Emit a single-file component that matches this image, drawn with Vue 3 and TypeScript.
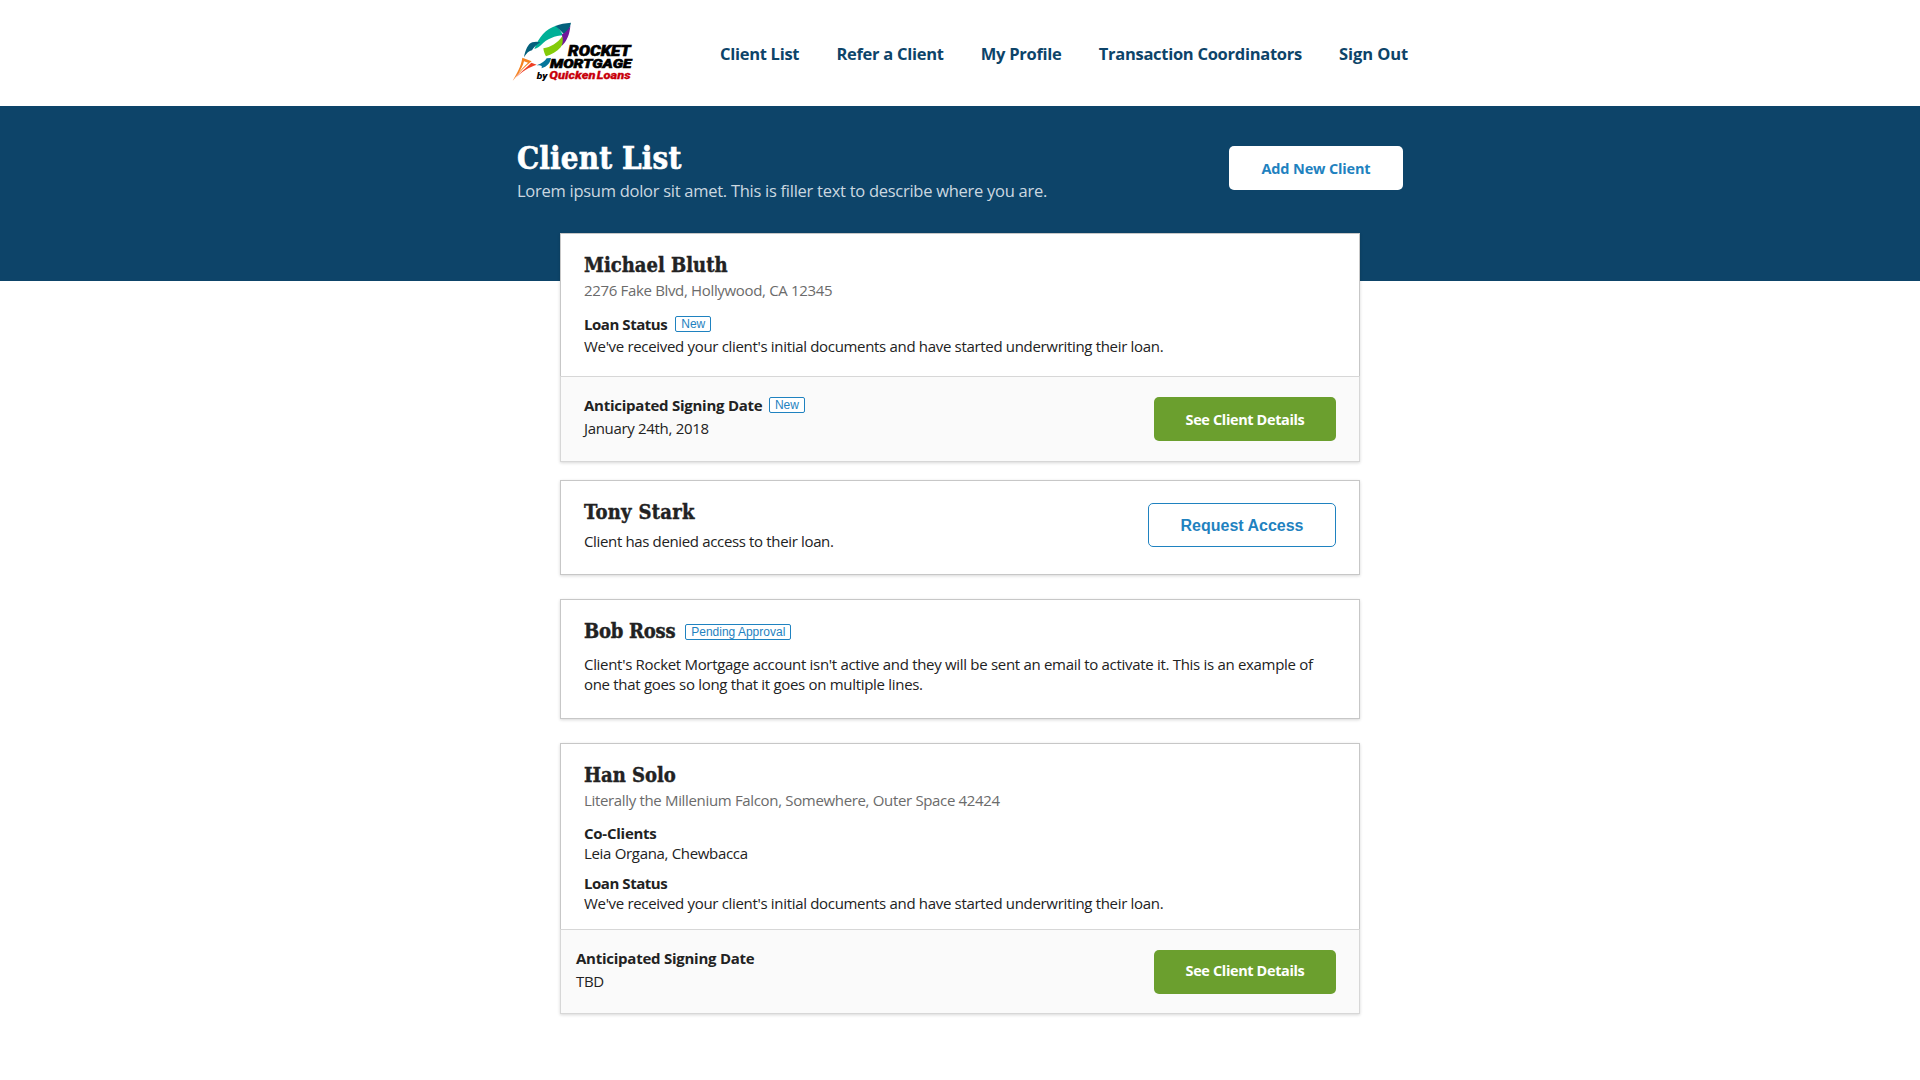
<script setup lang="ts">
const navItems: string[] = ['Client List', 'Refer a Client', 'My Profile', 'Transaction Coordinators', 'Sign Out']
</script>

<template>
  <div class="page">
    <header class="header">
      <div class="header-inner">
        <svg class="logo" viewBox="30 30 375 189" role="img" aria-label="Rocket Mortgage by Quicken Loans">
          <path d="M103 117 C116 80 138 57 168 47 C177 55 184 65 190 76 C166 76 140 88 124 104 C119 109 112 115 103 117 Z" fill="#00b097" />
          <path d="M166 48 C180 42 196 39 213 38 C210 52 205 66 197 78 C188 68 178 58 166 48 Z" fill="#03607c" />
          <path d="M211 48 C209 72 201 94 184 109 C186 96 187 86 186 73 C196 68 204 60 211 48 Z" fill="#70189a" />
          <path d="M130 115 C152 112 172 100 187 79 C190 94 188 104 182 112 C171 125 154 134 138 139 C134 132 131 124 130 115 Z" fill="#84cb0a" />
          <path d="M72 142 C76 120 84 101 97 97 C106 94 114 95 121 97 C108 105 101 113 96 121 C87 122 80 130 72 142 Z" fill="#03607c" />
          <path d="M110 166 C126 160 135 153 140 145 L153 144 C151 158 142 170 124 175 C128 169 125 165 110 166 Z" fill="#03759a" />
          <path d="M38 212 C51 190 63 169 67 143 L95 154 C77 168 58 187 38 212 Z M72 154 C69 167 62 179 56 188 C64 178 73 168 84 158 Z" fill="#f58220" fill-rule="evenodd" />
          <path d="M38 212 C59 188 78 174 94 158 L110 164 C88 172 66 182 38 212 Z" fill="#ee3e24" />
          <text class="logo-black" x="204" y="139" font-size="43" textLength="188" lengthAdjust="spacingAndGlyphs">ROCKET</text>
          <text class="logo-black" x="150" y="173" font-size="38" textLength="244" lengthAdjust="spacingAndGlyphs">MORTGAGE</text>
          <text class="logo-by" x="110" y="206" font-size="27" textLength="32" lengthAdjust="spacingAndGlyphs">by</text>
          <text class="logo-red" x="148" y="207" font-size="34" textLength="244" lengthAdjust="spacingAndGlyphs">Quicken Loans</text>
        </svg>
        <nav class="nav">
          <a v-for="item in navItems" :key="item" class="nav-link">{{ item }}</a>
        </nav>
      </div>
    </header>

    <section class="hero">
      <div class="hero-inner">
        <div>
          <h1 class="title">Client List</h1>
          <p class="subtitle">Lorem ipsum dolor sit amet. This is filler text to describe where you are.</p>
        </div>
        <button class="btn btn-white">Add New Client</button>
      </div>
    </section>

    <main class="cards">
      <article class="card michael">
        <div class="body">
          <h2 class="name">Michael Bluth</h2>
          <p class="text address">2276 Fake Blvd, Hollywood, CA 12345</p>
          <div class="line status"><h3 class="label">Loan Status</h3><span class="badge">New</span></div>
          <p class="text detail">We've received your client's initial documents and have started underwriting their loan.</p>
        </div>
        <footer class="foot">
          <div>
            <div class="line"><h3 class="label">Anticipated Signing Date</h3><span class="badge">New</span></div>
            <p class="text date">January 24th, 2018</p>
          </div>
          <button class="btn btn-green">See Client Details</button>
        </footer>
      </article>

      <article class="card tony">
        <div class="body split">
          <div>
            <h2 class="name">Tony Stark</h2>
            <p class="text detail">Client has denied access to their loan.</p>
          </div>
          <button class="btn btn-outline">Request Access</button>
        </div>
      </article>

      <article class="card bob">
        <div class="body">
          <div class="line"><h2 class="name">Bob Ross</h2><span class="badge">Pending Approval</span></div>
          <p class="text detail">Client's Rocket Mortgage account isn't active and they will be sent an email to activate it. This is an example of<br />one that goes so long that it goes on multiple lines.</p>
        </div>
      </article>

      <article class="card han">
        <div class="body">
          <h2 class="name">Han Solo</h2>
          <p class="text address">Literally the Millenium Falcon, Somewhere, Outer Space 42424</p>
          <h3 class="label co">Co-Clients</h3>
          <p class="text">Leia Organa, Chewbacca</p>
          <h3 class="label status">Loan Status</h3>
          <p class="text">We've received your client's initial documents and have started underwriting their loan.</p>
        </div>
        <footer class="foot">
          <div>
            <h3 class="label">Anticipated Signing Date</h3>
            <p class="text date">TBD</p>
          </div>
          <button class="btn btn-green">See Client Details</button>
        </footer>
      </article>
    </main>
  </div>
</template>

<style>
body {
  margin: 0;
  background: #fff;
}
</style>

<style scoped>
.page {
  min-height: 1080px;
  background: #fff;
  color: #222;
  font-family: 'Open Sans', 'Noto Sans', sans-serif;
}
h1, h2, h3, p {
  margin: 0;
}
.header {
  height: 106px;
}
.header-inner {
  width: 900px;
  height: 106px;
  margin: 0 auto;
  display: flex;
  justify-content: space-between;
}
.logo {
  width: 125px;
  height: 63px;
  margin-top: 20px;
}
.logo-black, .logo-red, .logo-by {
  font-family: Roboto, sans-serif;
  font-style: italic;
  font-weight: 900;
  fill: #000;
}
.logo-black {
  stroke: #000;
  stroke-width: 1.8;
}
.logo-red {
  fill: #c8000b;
  stroke: #c8000b;
  stroke-width: 0.8;
  word-spacing: -5px;
}
.nav {
  display: flex;
  gap: 37.2px;
  margin-top: 42px;
  margin-right: 2px;
  height: 24px;
}
.nav-link {
  font-size: 16.5px;
  line-height: 24px;
  font-weight: 700;
  letter-spacing: -0.28px;
  color: #0d4469;
  white-space: nowrap;
}
.nav-link:last-child {
  letter-spacing: -0.1px;
}
.hero {
  height: 175px;
  background: #0d4469;
}
.hero-inner {
  width: 886px;
  margin: 0 auto;
  display: flex;
  justify-content: space-between;
}
.title {
  margin-top: 32px;
  font: bold 31px/40px 'DejaVu Serif Condensed', 'DejaVu Serif', serif;
  font-stretch: 75%;
  letter-spacing: 0.15px;
  -webkit-text-stroke: 0.6px currentColor;
  color: #fff;
}
.subtitle {
  margin-top: 1px;
  font-size: 16.5px;
  line-height: 24px;
  letter-spacing: -0.27px;
  color: #cbd8e0;
  white-space: nowrap;
}
.btn {
  box-sizing: border-box;
  height: 44px;
  padding: 2px 0 0;
  border: 0;
  border-radius: 5px;
  font-family: 'Open Sans', sans-serif;
  font-size: 14.5px;
  font-weight: 700;
  line-height: 20px;
  white-space: nowrap;
}
.btn-white {
  width: 174px;
  margin: 40px 0 0;
  background: #fff;
  color: #1f82c0;
  letter-spacing: -0.15px;
}
.btn-green {
  width: 182px;
  background: #6b9f2e;
  color: #fff;
  letter-spacing: -0.37px;
}
.btn-outline {
  width: 188px;
  border: 1px solid #1f82c0;
  background: #fff;
  color: #1f82c0;
  font-family: 'Liberation Sans', Arial, sans-serif;
  font-size: 16px;
}
.cards {
  width: 800px;
  margin: -48px auto 0;
}
.card {
  position: relative;
  box-sizing: border-box;
  display: flex;
  flex-direction: column;
  background: #fff;
  box-shadow: 0 1px 3px rgba(0, 0, 0, 0.16);
}
.body {
  box-sizing: border-box;
  flex: 1;
  padding: 19px 23px 0 23px;
  border: 1px solid #c7c7c7;
}
.split {
  display: flex;
  justify-content: space-between;
}
.foot {
  box-sizing: border-box;
  display: flex;
  justify-content: space-between;
  padding: 18px 23px 0 23px;
  border: 1px solid #d7d7d7;
  background: #fafafa;
}
.michael .body, .han .body {
  border-bottom: 0;
}
.name {
  font: bold 20px/24px 'DejaVu Serif Condensed', 'DejaVu Serif', serif;
  font-stretch: 75%;
  -webkit-text-stroke: 0.4px currentColor;
  white-space: nowrap;
}
.text {
  font-size: 15px;
  line-height: 20px;
  letter-spacing: -0.32px;
  white-space: nowrap;
}
.label {
  font-size: 15px;
  line-height: 20px;
  font-weight: 700;
  letter-spacing: -0.25px;
  white-space: nowrap;
}
.status.label, .status .label {
  letter-spacing: -0.45px;
}
.address {
  margin-top: 3px;
  letter-spacing: -0.335px;
  color: #6b6b6b;
}
.line {
  display: flex;
  align-items: flex-start;
  gap: 6.5px;
}
.line.status {
  gap: 8px;
}
.badge {
  box-sizing: border-box;
  width: 36px;
  height: 16px;
  margin-top: 2px;
  border: 1px solid #1f82c0;
  border-radius: 2px;
  color: #1f82c0;
  background: #fff;
  font: 12px/15px 'Liberation Sans', Arial, sans-serif;
  text-align: center;
  white-space: nowrap;
}
.date {
  margin-top: 3px;
}
.michael {
  height: 229px;
}
.michael .status {
  margin-top: 14px;
}
.michael .detail {
  margin-top: 2px;
}
.michael .foot {
  height: 86px;
}
.michael .btn-green {
  margin: 2px 0 0;
}
.tony {
  height: 95px;
  margin-top: 18px;
}
.tony .name {
  letter-spacing: 0.3px;
}
.tony .detail {
  margin-top: 7px;
  letter-spacing: -0.35px;
}
.tony .btn {
  margin: 3px 0 0;
}
.bob {
  height: 120px;
  margin-top: 24px;
}
.bob .name {
  letter-spacing: -0.25px;
}
.bob .badge {
  width: 106px;
  margin: 5px 0 0 3.5px;
}
.bob .detail {
  margin-top: 11px;
  letter-spacing: -0.305px;
}
.han {
  height: 271px;
  margin-top: 24px;
}
.han .co {
  margin-top: 13px;
}
.han .status {
  margin-top: 10px;
}
.han .foot {
  height: 85px;
  padding-left: 15px;
}
.han .btn-green {
  margin: 2px 0 0;
  padding: 0 0 2px;
}
</style>
